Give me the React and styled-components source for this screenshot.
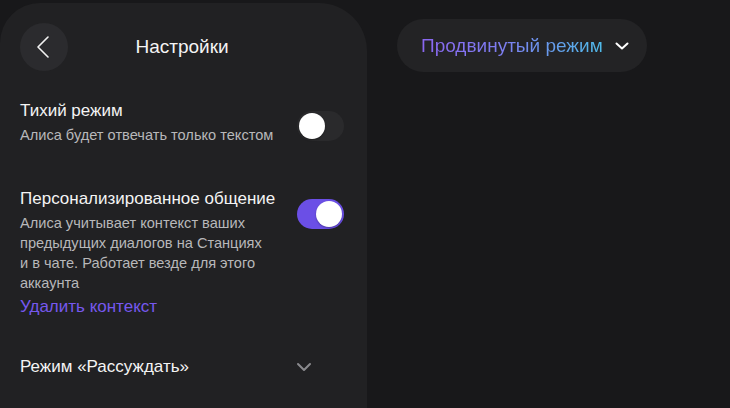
import React, { useState } from "react";
import styled, { createGlobalStyle } from "styled-components";

const GlobalStyle = createGlobalStyle`
  html, body {
    margin: 0;
    padding: 0;
    background: #18181a;
    font-family: "Liberation Sans", Arial, sans-serif;
    -webkit-font-smoothing: antialiased;
  }
  * {
    box-sizing: border-box;
  }
`;

const App = () => {
  const [silent, setSilent] = useState(false);
  const [personal, setPersonal] = useState(true);

  return (
    <>
      <GlobalStyle />
      <Page>
        <Panel>
          <Header>
            <BackButton aria-label="Назад">
              <svg width="12" height="22" viewBox="0 0 12 22" fill="none">
                <path
                  d="M11 1L1 11l10 10"
                  stroke="#f2f2f2"
                  strokeWidth="1.6"
                  strokeLinecap="round"
                  strokeLinejoin="round"
                />
              </svg>
            </BackButton>
            <Title>Настройки</Title>
          </Header>

          <SettingRow>
            <TextBlock>
              <SettingTitle>Тихий режим</SettingTitle>
              <Description>Алиса будет отвечать только текстом</Description>
            </TextBlock>
            <Toggle $on={silent} onClick={() => setSilent(!silent)}>
              <Knob />
            </Toggle>
          </SettingRow>

          <SettingRow $top={44}>
            <TextBlock>
              <SettingTitle>Персонализированное общение</SettingTitle>
              <Description $maxWidth={250}>
                Алиса учитывает контекст ваших предыдущих диалогов на Станциях
                и в чате. Работает везде для этого аккаунта
              </Description>
              <LinkButton>Удалить контекст</LinkButton>
            </TextBlock>
            <Toggle $on={personal} onClick={() => setPersonal(!personal)}>
              <Knob />
            </Toggle>
          </SettingRow>

          <ExpandRow>
            <SettingTitle>Режим «Рассуждать»</SettingTitle>
            <svg width="16" height="10" viewBox="0 0 16 10" fill="none">
              <path
                d="M2 2l6 6 6-6"
                stroke="#8a8a8e"
                strokeWidth="2"
                strokeLinecap="round"
                strokeLinejoin="round"
              />
            </svg>
          </ExpandRow>
        </Panel>

        <ModePill>
          <GradientText>Продвинутый режим</GradientText>
          <svg width="14" height="8" viewBox="0 0 14 8" fill="none">
            <path
              d="M1.5 1.5l5.5 5 5.5-5"
              stroke="#ffffff"
              strokeWidth="2"
              strokeLinecap="round"
              strokeLinejoin="round"
            />
          </svg>
        </ModePill>
      </Page>
    </>
  );
};

const Page = styled.div`
  display: flex;
  align-items: flex-start;
  gap: 30px;
  height: 408px;
  overflow: hidden;
  padding-top: 3px;
`;

const Panel = styled.div`
  width: 367px;
  height: 440px;
  flex-shrink: 0;
  background: #212123;
  border-radius: 40px 48px 0 0;
  padding: 20px 23px 0 20px;
`;

const Header = styled.div`
  position: relative;
  display: flex;
  align-items: center;
  height: 48px;
`;

const BackButton = styled.button`
  width: 48px;
  height: 48px;
  border-radius: 50%;
  border: none;
  background: #2b2b2e;
  display: flex;
  align-items: center;
  justify-content: center;
  padding: 0 3px 0 0;
  cursor: pointer;
`;

const Title = styled.h1`
  position: absolute;
  left: 0;
  right: 0;
  margin: 0;
  text-align: center;
  font-size: 19px;
  font-weight: 400;
  color: #f4f4f4;
  pointer-events: none;
`;

const SettingRow = styled.div`
  display: flex;
  align-items: flex-start;
  justify-content: space-between;
  gap: 16px;
  margin-top: ${(p) => p.$top ?? 30}px;
`;

const TextBlock = styled.div`
  flex: 1;
`;

const SettingTitle = styled.div`
  font-size: 17px;
  line-height: 20px;
  color: #f4f4f4;
`;

const Description = styled.div`
  margin-top: 4px;
  max-width: ${(p) => (p.$maxWidth ? `${p.$maxWidth}px` : "none")};
  font-size: 14.6px;
  line-height: 20px;
  color: #b8b8ba;
`;

const LinkButton = styled.div`
  margin-top: 4px;
  font-size: 17px;
  line-height: 20px;
  color: #7658ee;
  cursor: pointer;
`;

const Toggle = styled.div`
  width: 47px;
  height: 30px;
  margin-top: 10px;
  flex-shrink: 0;
  border-radius: 15px;
  background: ${(p) => (p.$on ? "#6b4fe6" : "#2a2a2c")};
  display: flex;
  align-items: center;
  justify-content: ${(p) => (p.$on ? "flex-end" : "flex-start")};
  padding: 0 2px;
  cursor: pointer;
`;

const Knob = styled.div`
  width: 26px;
  height: 26px;
  border-radius: 50%;
  background: #ffffff;
  box-shadow: 0 1px 2px rgba(0, 0, 0, 0.3);
`;

const ExpandRow = styled.div`
  display: flex;
  align-items: center;
  justify-content: space-between;
  margin-top: 40px;
  padding-right: 32px;
  cursor: pointer;
`;

const ModePill = styled.div`
  display: flex;
  align-items: center;
  gap: 12px;
  height: 53px;
  margin-top: 16px;
  padding: 0 18px 0 24px;
  border-radius: 27px;
  background: #232325;
  cursor: pointer;
`;

const GradientText = styled.span`
  font-size: 19px;
  background: linear-gradient(90deg, #8a66f0 0%, #7d7ef0 45%, #4fbbe9 100%);
  -webkit-background-clip: text;
  background-clip: text;
  color: transparent;
`;

export default App;
